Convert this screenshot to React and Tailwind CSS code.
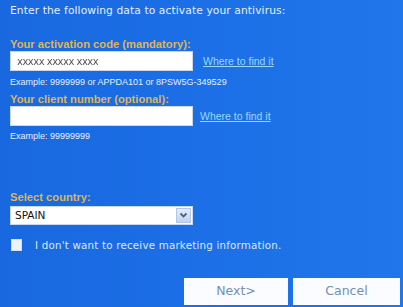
export default function App() {
  return (
    <div
      className="w-[403px] h-[307px] overflow-hidden bg-gradient-to-r from-[#1968e0] via-[#1c6fe6] to-[#2076ea] flex flex-col pl-[10px] pr-[3px]"
      style={{ fontFamily: '"DejaVu Sans", Verdana, sans-serif' }}
    >
      {/* Heading */}
      <p className="mt-[4px] text-[10.7px] leading-[14px] text-[#e6efff] tracking-[0.1px]">
        Enter the following data to activate your antivirus:
      </p>

      {/* Activation code */}
      <label className="mt-[19px] font-['Liberation_Sans',Arial,sans-serif] text-[11.2px] leading-[14px] font-bold text-[#dcb55c]">
        Your activation code (mandatory):
      </label>
      <div className="flex items-center">
        <div className="w-[183px] h-[20px] bg-white flex items-center px-[6px] border border-[#c8d8ee]">
          <span className="text-[10px] text-[#555] blur-[0.5px] tracking-[-0.5px]">
            xxxxx xxxxx xxxx
          </span>
        </div>
        <a className="ml-[10px] font-['Liberation_Sans',Arial,sans-serif] text-[10.5px] leading-[14px] text-[#9ad8ff] underline">
          Where to find it
        </a>
      </div>
      <p className="mt-[5px] font-['Liberation_Sans',Arial,sans-serif] text-[9px] leading-[12px] text-[#e6efff]">
        Example: 9999999 or APPDA101 or 8PSW5G-349529
      </p>

      {/* Client number */}
      <label className="mt-[4px] font-['Liberation_Sans',Arial,sans-serif] text-[11.2px] leading-[14px] font-bold text-[#dcb55c]">
        Your client number (optional):
      </label>
      <div className="flex items-center">
        <div className="w-[183px] h-[20px] bg-white border border-[#c8d8ee]"></div>
        <a className="ml-[7px] font-['Liberation_Sans',Arial,sans-serif] text-[10.5px] leading-[14px] text-[#9ad8ff] underline">
          Where to find it
        </a>
      </div>
      <p className="mt-[4px] font-['Liberation_Sans',Arial,sans-serif] text-[9px] leading-[12px] text-[#e6efff]">
        Example: 99999999
      </p>

      {/* Country */}
      <label className="mt-[48px] font-['Liberation_Sans',Arial,sans-serif] text-[11.2px] leading-[14px] font-bold text-[#dcb55c]">
        Select country:
      </label>
      <div className="mt-[2px] w-[183px] h-[19px] bg-white border border-[#c8d8ee] flex items-center justify-between pl-[4px] pr-[1px]">
        <span className="text-[10.5px] text-[#111]">SPAIN</span>
        <span className="w-[15px] h-[15px] bg-gradient-to-b from-[#e4ecfa] to-[#c3d3ee] border border-[#b4c6e6] flex items-center justify-center">
          <svg width="9" height="7" viewBox="0 0 9 7">
            <path d="M1.5 1.5 L4.5 4.5 L7.5 1.5" stroke="#4d6185" strokeWidth="1.8" fill="none" />
          </svg>
        </span>
      </div>

      {/* Marketing checkbox */}
      <div className="mt-[13px] flex items-center">
        <span className="ml-[1px] w-[11px] h-[12px] bg-[#eef3fb] border border-[#d2def2]"></span>
        <span className="ml-[13px] text-[10.3px] leading-[14px] text-[#dbe8ff] tracking-[0.2px]">
          I don't want to receive marketing information.
        </span>
      </div>

      {/* Buttons */}
      <div className="mt-auto mb-[2px] flex justify-end gap-[5px]">
        <button className="w-[104px] h-[27px] bg-[#fbfcff] text-[12.5px] text-[#7190b8]">
          Next&gt;
        </button>
        <button className="w-[107px] h-[27px] bg-[#fbfcff] text-[12.5px] text-[#7190b8]">
          Cancel
        </button>
      </div>
    </div>
  );
}
